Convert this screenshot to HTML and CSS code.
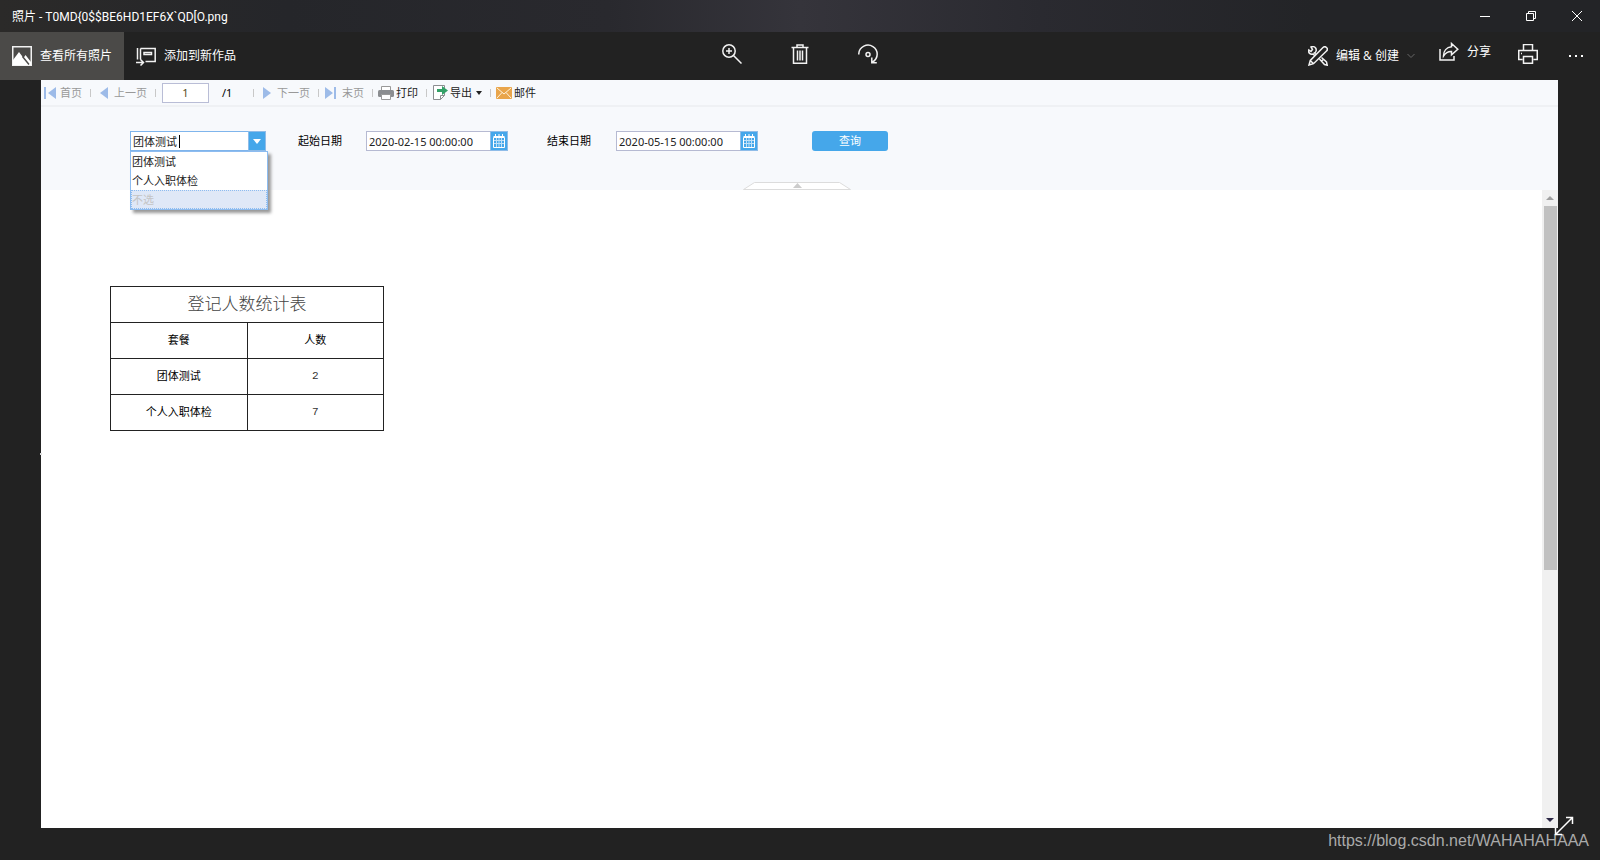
FILE: index.html
```html
<!DOCTYPE html>
<html lang="zh-CN">
<head>
<meta charset="utf-8">
<title>照片</title>
<link rel="stylesheet" href="styles.css">
</head>
<body>
<header class="titlebar">
  <span class="title">照片 - T0MD{0$$BE6HD1EF6X`QD[O.png</span>
  <div class="window-buttons">
    <button aria-label="最小化"><svg width="12" height="12" viewBox="0 0 12 12"><path d="M1 6.5h10"/></svg></button>
    <button aria-label="还原"><svg width="12" height="12" viewBox="0 0 12 12"><path d="M1.500 3.500h7v7h-7zM3.500 3.500v-2h7v7h-2"/></svg></button>
    <button aria-label="关闭"><svg width="12" height="12" viewBox="0 0 12 12"><path d="M1 1l10 10M11 1L1 11"/></svg></button>
  </div>
</header>

<nav class="photo-bar">
  <div class="bar-left">
    <button class="bar-button active">
      <svg width="20" height="20" viewBox="0 0 20 20"><path d="M.75.75h18.500v18.500H.75z"/><path class="solid" d="M1 14l6-8 4.500 6 2-3 5.500 7v3H1z"/><path class="cut" d="M10.500 10.500l6.500 8"/></svg>
      <span>查看所有照片</span>
    </button>
    <button class="bar-button">
      <svg width="20" height="20" viewBox="0 0 20 20"><path d="M4.500 2.500h14.700v13H9.500M4.500 2.500v11M1.500 2v11.500M8 6.500h7.500v2H8zM0 16.500h7M4.500 13.500l3 3-3 3"/></svg>
      <span>添加到新作品</span>
    </button>
  </div>
  <div class="bar-center">
    <button aria-label="放大"><svg width="20" height="20" viewBox="0 0 20 20"><circle cx="7" cy="7" r="6.200"/><path d="M7 4v6M4 7h6M11.500 11.500l8 8"/></svg></button>
    <button aria-label="删除"><svg width="20" height="20" viewBox="0 0 20 20"><path d="M1.500 3.500h17M7 3V1h6v2M3.500 3.500v15.700h13V3.500M7.500 6.500v10M10 6.500v10M12.500 6.500v10"/></svg></button>
    <button aria-label="旋转"><svg width="20" height="20" viewBox="0 0 20 20"><path d="M.8 10.500V9.500A9.200 9 0 1 1 14.500 18M13.800 13.500v5.300h5"/><circle cx="10" cy="10.500" r="2"/></svg></button>
  </div>
  <div class="bar-right">
    <button class="edit">
      <svg width="20" height="20" viewBox="0 0 20 20"><path d="M1 19l1.300-4.500L15 1.500a2.400 2.400 0 0 1 3.500 3.500L5.500 17.700zM2.300 14.500l3.200 3.200M8 8.500L6.500 7A3.200 3.200 0 0 0 3 1l1.500 2.500-1.500 2L.8 4A3.200 3.200 0 0 0 5 8l2 2M11.500 13l5 5.500 2.700.7-.7-3.200-5-4.500M13.500 15l2.500-2"/></svg>
      <span>编辑 &amp; 创建</span>
      <svg class="chevron" width="8" height="8" viewBox="0 0 8 8"><path d="M.5 2L4 5.500 7.500 2"/></svg>
    </button>
    <button class="share">
      <svg width="20" height="20" viewBox="0 0 20 20"><path d="M1 7v11h14v-4M12.500 1.500l6.300 5.800-6.300 5.500V9.500C9 9.300 6.500 11 4.500 14 4.500 9 7.500 5.300 12.500 4.800z"/></svg>
      <span>分享</span>
    </button>
    <button class="square print" aria-label="打印"><svg width="20" height="20" viewBox="0 0 20 20"><path d="M5.500 6.500v-6h9v6M4.500 15.500H.75v-9h18.500v9H15.500M5.500 12.500h9v6.700h-9zM3 9.500h1"/></svg></button>
    <button class="square" aria-label="更多"><svg class="dots" width="16" height="4" viewBox="0 0 16 4"><path d="M1 1h2v2H1zM7 1h2v2H7zM13 1h2v2h-2z"/></svg></button>
  </div>
</nav>

<main class="stage">
  <span class="edge-mark"></span>
  <section class="report">
    <div class="report-bar">
      <button class="tool muted"><svg width="16" height="14" viewBox="0 0 16 14"><path d="M2 1h2v12H2zM14 1v12L6 7z"/></svg>首页</button>
      <i class="sep"></i>
      <button class="tool muted"><svg width="16" height="14" viewBox="0 0 16 14"><path d="M12 1v12L4 7z"/></svg>上一页</button>
      <i class="sep"></i>
      <input class="page-number" aria-label="页码" value="1">
      <span class="page-total">/1</span>
      <i class="sep"></i>
      <button class="tool muted"><svg width="16" height="14" viewBox="0 0 16 14"><path d="M4 1v12l8-6z"/></svg>下一页</button>
      <i class="sep"></i>
      <button class="tool muted"><svg width="16" height="14" viewBox="0 0 16 14"><path d="M1 1v12l8-6zM10 1h2v12h-2z"/></svg>末页</button>
      <i class="sep"></i>
      <button class="tool"><svg width="16" height="14" viewBox="0 0 16 14"><path fill="#fff" stroke="#999" d="M3.500.5h9v6h-9z"/><rect y="4" width="16" height="7" rx="1.500" fill="#8b8d90"/><path fill="#fff" stroke="#999" d="M3.500 8.500h9v5h-9z"/></svg>打印</button>
      <i class="sep"></i>
      <button class="tool"><svg width="16" height="15" viewBox="0 0 16 15"><path fill="#fff" stroke="#8b8d90" d="M1.500.5h11v10l-4 4h-7zM8.500 14.500v-4h4"/><path fill="#33a067" d="M5 4h5V1l6 4.500-6 4.500V7H5z"/></svg>导出<svg class="caret" width="6" height="4" viewBox="0 0 6 4"><path fill="#222" d="M0 0h6L3 4z"/></svg></button>
      <i class="sep"></i>
      <button class="tool"><svg width="16" height="12" viewBox="0 0 16 12"><rect width="16" height="12" rx="1" fill="#e9a54b"/><path fill="none" stroke="#fff3dc" d="M1 1l7 6 7-6M1 11l5-5.500M15 11l-5-5.500"/></svg>邮件</button>
    </div>

    <form class="params">
      <div class="combo">
        <div class="field">
          <input aria-label="套餐" role="combobox" aria-expanded="true" aria-controls="packages" value="团体测试">
          <button type="button" aria-label="展开"><svg width="8" height="5" viewBox="0 0 8 5"><path fill="#fff" d="M0 0h8L4 5z"/></svg></button>
        </div>
        <span class="text-cursor"></span>
        <ul class="options" id="packages" role="listbox">
          <li role="option">团体测试</li>
          <li role="option">个人入职体检</li>
          <li role="option" class="hovered">不选</li>
        </ul>
      </div>
      <label class="first-label" for="start">起始日期</label>
      <div class="field date">
        <input id="start" value="2020-02-15 00:00:00">
        <button type="button" aria-label="选择起始日期"><svg width="14" height="14" viewBox="0 0 14 14"><path class="calendar-frame" d="M1.500 3.500h11v10h-11zM1.500 2.500h11M3.500 0v3M7 0v3M10.500 0v3"/><path class="calendar-grid" d="M2 6.500h10M2 9.500h10M4.500 4v9M9.500 4v9M7 4v9"/></svg></button>
      </div>
      <label for="end">结束日期</label>
      <div class="field date">
        <input id="end" value="2020-05-15 00:00:00">
        <button type="button" aria-label="选择结束日期"><svg width="14" height="14" viewBox="0 0 14 14"><path class="calendar-frame" d="M1.500 3.500h11v10h-11zM1.500 2.500h11M3.500 0v3M7 0v3M10.500 0v3"/><path class="calendar-grid" d="M2 6.500h10M2 9.500h10M4.500 4v9M9.500 4v9M7 4v9"/></svg></button>
      </div>
      <button type="button" class="query">查询</button>
      <button type="button" class="collapse" aria-label="收起"><svg width="108" height="8" viewBox="0 0 108 8"><path fill="#fff" stroke="#dcdcdc" d="M.5 7.500l11-7h85l11 7z"/><path fill="#ccc" d="M50 6h9l-4.500-5z"/></svg></button>
    </form>

    <div class="sheet">
      <div class="paper">
        <table>
          <thead>
            <tr><th colspan="2" class="table-title">登记人数统计表</th></tr>
            <tr><th>套餐</th><th>人数</th></tr>
          </thead>
          <tbody>
            <tr><td>团体测试</td><td class="count">2</td></tr>
            <tr><td>个人入职体检</td><td class="count">7</td></tr>
          </tbody>
        </table>
      </div>
      <div class="scrollbar">
        <svg width="8" height="4" viewBox="0 0 8 4"><path fill="#a0a0a0" d="M0 4h8L4 0z"/></svg>
        <div class="track"><div class="thumb"></div></div>
        <svg width="8" height="4" viewBox="0 0 8 4"><path fill="#2b2745" d="M0 0h8L4 4z"/></svg>
      </div>
    </div>
  </section>
  <button class="expand" aria-label="全屏"><svg width="20" height="20" viewBox="0 0 20 20"><path d="M1.500 18.500l17-17M12 1.500h6.500V8M1.500 12v6.500H8"/></svg></button>
</main>
<footer class="footer"><a href="https://blog.csdn.net/WAHAHAHAAA">https://blog.csdn.net/WAHAHAHAAA</a></footer>
</body>
</html>
```
FILE: styles.css
```css
* { box-sizing: border-box; }
body {
  margin: 0;
  min-height: 100vh;
  display: flex;
  flex-direction: column;
  background: #222;
  color: #fff;
  font: 12px/16px "Open Sans", "Noto Sans CJK SC", sans-serif;
}
button {
  display: flex;
  align-items: center;
  justify-content: center;
  padding: 0;
  border: 0;
  background: none;
  color: inherit;
  font: inherit;
  white-space: nowrap;
}
input { font: inherit; color: inherit; min-width: 0; outline: 0; }
svg { flex: none; }

.titlebar {
  height: 32px;
  display: flex;
  justify-content: space-between;
  align-items: center;
  padding-left: 12px;
  background: linear-gradient(90deg, #2b2a29, #25262a 18%, #29292e 38%, #35343b 50%, #2a2a30 65%, #232427 82%);
}
.title { padding-top: 2px; font-family: Roboto, "Noto Sans CJK SC", sans-serif; }
.window-buttons { display: flex; align-self: stretch; }
.window-buttons button { width: 46px; }
.window-buttons svg { fill: none; stroke: #fff; }

.photo-bar {
  height: 48px;
  display: grid;
  grid-template-columns: 1fr auto 1fr;
}
.photo-bar svg { fill: none; stroke: #f2f2f2; stroke-width: 1.500; }
.photo-bar .solid { fill: #fff; stroke: none; }
.photo-bar .cut { stroke: #4b4a48; }
.bar-left, .bar-center, .bar-right { display: flex; }
.bar-button { gap: 8px; padding: 0 12px; }
.active { background: #4b4a48; }
.bar-center button { width: 68px; padding-bottom: 4px; }
.bar-right { justify-content: flex-end; }
.edit { gap: 8px; margin-right: 24px; }
.photo-bar .chevron { stroke: #666; stroke-width: 1; }
.share { gap: 8px; margin-right: 13px; padding-bottom: 8px; }
.square { width: 48px; }
.print { padding-bottom: 4px; }
.photo-bar .dots { fill: #fff; stroke: none; }

.stage {
  position: relative;
  flex: 1;
  display: flex;
  padding: 0 42px 0 41px;
}
.edge-mark { position: absolute; left: 40px; top: 373px; width: 2px; height: 2px; background: #ddd; }
.report {
  flex: 1;
  display: flex;
  flex-direction: column;
  background: #fff;
  color: #222;
  font: 11px/16px "Noto Sans", "Noto Sans CJK SC", sans-serif;
}
.report-bar {
  height: 27px;
  display: flex;
  align-items: center;
  padding-left: 1px;
  background: #f7f9fc;
  border-bottom: 2px solid #eff1f4;
}
.tool { gap: 2px; }
.muted { color: #999; }
.muted svg { fill: #9dbbe8; }
.caret { margin-left: 2px; }
.sep { width: 1px; height: 8px; margin: 0 5px 0 8px; background: #c8c8c8; }
.page-number {
  width: 47px;
  height: 20px;
  margin-left: 1px;
  border: 1px solid #b9bdd6;
  background: #fff;
  color: #554a20;
  text-align: center;
}
.page-total { width: 36px; padding-left: 13px; color: #000; }

.params {
  position: relative;
  height: 83px;
  display: flex;
  align-items: flex-start;
  padding: 24px 0 0 89px;
  background: #f7f9fc;
}
.combo { position: relative; width: 136px; }
.field { display: flex; height: 20px; border: 1px solid #b6bad2; background: #fff; }
.field input { flex: 1; width: 0; border: 0; padding: 1px 2px 0; background: none; }
.field button { width: 18px; margin: -1px; margin-left: 0; background: #45a7ea; border: 1px solid #8fbce8; }
.calendar-frame { fill: none; stroke: #fff; }
.calendar-grid { fill: none; stroke: #bfe0f8; }
.combo .field { border-color: #7fb5ec; }
.text-cursor { position: absolute; left: 49px; top: 4px; width: 1px; height: 13px; background: #000; }
.options {
  position: absolute;
  z-index: 1;
  left: 0;
  top: 20px;
  width: 138px;
  margin: 0;
  padding: 0;
  list-style: none;
  background: #fff;
  border: 1px solid #8dbcf0;
  box-shadow: 3px 3px 3px #999;
}
.options li { height: 19px; padding-left: 1px; line-height: 19px; }
.options .hovered { background: #dfe8f7; color: #c4c4c4; outline: 1px dotted #8dbcf0; outline-offset: -1px; }
.params label { width: 69px; margin-left: 39px; line-height: 20px; color: #000; }
.params .first-label { width: 68px; margin-left: 32px; }
.date { width: 142px; }
.query { width: 76px; height: 20px; margin-left: 54px; border-radius: 3px; background: #45a7ea; color: #fff; }
.collapse { position: absolute; left: 702px; bottom: 0; }

.sheet { flex: 1; display: flex; }
.paper { flex: 1; padding: 96px 0 0 69px; }
table { width: 274px; table-layout: fixed; border-collapse: collapse; color: #000; }
th, td { height: 36px; padding: 0 0 2px; border: 1px solid #222; text-align: center; font-weight: 400; }
.table-title { padding-bottom: 4px; font-size: 17px; font-family: "Noto Sans CJK SC", sans-serif; font-weight: 300; color: #444; }
.count { font-family: "Liberation Mono", monospace; color: #333; }
.scrollbar {
  width: 16px;
  display: flex;
  flex-direction: column;
  align-items: center;
  padding: 6px 0;
  gap: 6px;
  background: #f0f0f0;
}
.track { flex: 1; width: 13px; }
.thumb { height: 60%; background: #c1c1c1; }
.expand { position: absolute; right: 26px; bottom: -8px; }
.expand svg { fill: none; stroke: #fff; stroke-width: 1.500; }
.footer { height: 32px; padding: 4px 11px 0 0; text-align: right; }
.footer a { color: #aaa; font: 16px/18px "Liberation Sans", Arial, sans-serif; text-decoration: none; }
```
